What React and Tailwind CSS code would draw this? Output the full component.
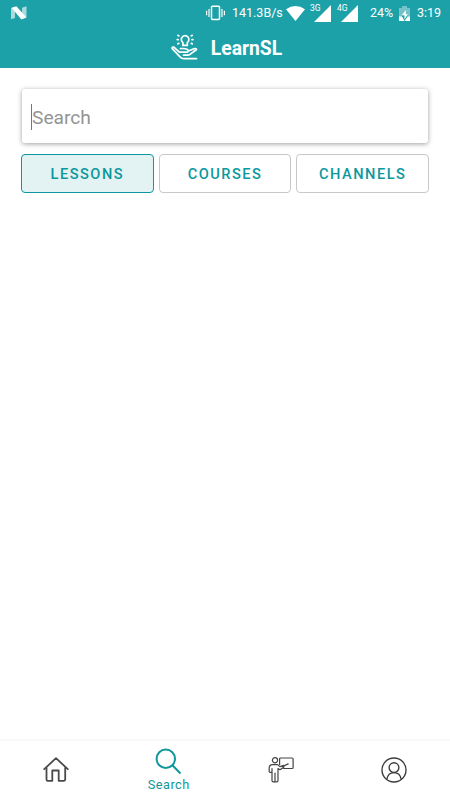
import React, { useState } from "react";

const TABS = ["Lessons", "Courses", "Channels"];

function NougatIcon() {
  return (
    <svg width="16" height="14" viewBox="0 0 16 14">
      <path d="M0 2.2 4 .8V12L0 13.2z" fill="#a9dbde" />
      <path d="M11 1.8 15.5.3v11L11 13z" fill="#a9dbde" />
      <path d="M.6 1.8 5.4.2 15.4 11.4 10.4 13.6z" fill="#fff" />
    </svg>
  );
}

function VibrateIcon() {
  return (
    <svg width="19" height="16" viewBox="0 0 19 16" fill="none" stroke="#fff">
      <rect x="5.5" y="1.2" width="8" height="13.3" rx="1" strokeWidth="1.5" />
      <path d="M3 4v8M.6 5.7v4.6M16 4v8M18.4 5.7v4.6" strokeWidth="1.2" />
    </svg>
  );
}

function WifiIcon() {
  return (
    <svg width="19" height="15" viewBox="0 0 19 15" fill="#fff">
      <path d="M0 3.2Q9.5-3 19 3.2L9.5 15z" />
    </svg>
  );
}

function Signal({ label }) {
  return (
    <div className="relative flex h-[18px] w-[21px] items-end justify-end">
      <span className="absolute top-[-1px] left-0 text-[8.5px] leading-[10px]">
        {label}
      </span>
      <svg width="17" height="17" viewBox="0 0 17 17" fill="#fff">
        <path d="M17 0v17H0z" />
      </svg>
    </div>
  );
}

function BatteryIcon() {
  return (
    <svg width="11" height="15" viewBox="0 0 11 15">
      <path d="M0 2h3V0h5v2h3v9H0z" fill="#75c3c8" />
      <path d="M0 10.5h11V15H0z" fill="#fff" />
      <path d="M6.8 4 2.6 9.4h2.8v4.2l3.4-5.4h-2z" fill="#fff" />
      <path d="M2.6 9.6h2.8v4l3-4.6v2l-3 4z" fill="#1da1a9" />
    </svg>
  );
}

function Logo() {
  return (
    <svg
      width="27"
      height="27"
      viewBox="0 0 27 27"
      fill="none"
      stroke="#fff"
      strokeWidth="1.7"
      strokeLinecap="round"
      strokeLinejoin="round"
    >
      <path d="M11.9 8.6a3.8 3.8 0 1 1 4.4 0v2.8h-4.4z" />
      <path d="M6.9 1.4l.9.4M6.2 5.6h1M6.9 9.8l.9-.4M21.2 1.4l-.9.4M21.9 5.6h-1M21.2 9.8l-.9-.4" />
      <path d="M25.5 24.6H12.5q-1.8 0-3-1.2L1.2 14.6q-.5-1.8 1.4-1.6L8.4 18.2H16.200q2-1.200.3-2.600-2.500-1.500-7-1" />
      <path d="M18 16.800l5-2q2-.6 2.600.7L19 20.400q-1 .8-2.500.8h-4" />
    </svg>
  );
}

function HomeIcon() {
  return (
    <svg
      width="26"
      height="26"
      viewBox="0 0 26 26"
      fill="none"
      stroke="#4a4a4a"
      strokeWidth="1.8"
      strokeLinejoin="round"
      strokeLinecap="round"
    >
      <path d="M1.2 12.2 13 1.2l11.8 11" />
      <path d="M3.5 11v11.5q0 1.3 1.3 1.3h4.5V13.5h6.4v10.3h5q1.5 0 1.5-1.3V11" />
    </svg>
  );
}

function SearchIcon() {
  return (
    <svg
      width="27"
      height="27"
      viewBox="0 0 27 27"
      fill="none"
      stroke="#0f979c"
      strokeWidth="2"
    >
      <circle cx="10.8" cy="10.8" r="9.2" />
      <path d="M17.4 17.3 25.5 25.5" />
    </svg>
  );
}

function TeacherIcon() {
  return (
    <svg
      width="26"
      height="26"
      viewBox="0 0 26 26"
      fill="none"
      stroke="#444"
      strokeWidth="1.2"
      strokeLinecap="round"
      strokeLinejoin="round"
    >
      <circle cx="7" cy="3.3" r="2.6" />
      <path d="M11.6 7.5V2q0-1 1-1h11.5q1 0 1 1v8.5q0 1-1 1h-8.6" />
      <path d="M4 23.5V11.5M4 15.4H2.2q-1 0-1-1V11q0-3.4 3.3-3.4h5.1l2.3 2 3.9-1.2v1.8l-3.8 2.5-2-1.1v11.9q0 1.3-1.4 1.3H5.3Q4 24.8 4 23.5" />
      <path d="M7 16v8.6M14 9.7l6.2-2.8" />
    </svg>
  );
}

function ProfileIcon() {
  return (
    <svg
      width="26"
      height="26"
      viewBox="0 0 26 26"
      fill="none"
      stroke="#3c3c3c"
      strokeWidth="1.35"
    >
      <circle cx="13" cy="13" r="12" />
      <circle cx="13" cy="10.6" r="4.9" />
      <path d="M5.8 22.4c.7-4.2 3.6-6.8 7.2-6.8s6.5 2.6 7.2 6.8" />
    </svg>
  );
}

function StatusBar() {
  return (
    <div className="flex h-[26px] items-center pr-2 pl-[11px] text-[12.5px]">
      <NougatIcon />
      <div className="ml-auto flex items-center">
        <VibrateIcon />
        <span className="ml-[7px] w-[54px] pt-px whitespace-nowrap">
          141.3B/s
        </span>
        <WifiIcon />
        <div className="ml-[5px] flex gap-[6px]">
          <Signal label="3G" />
          <Signal label="4G" />
        </div>
        <span className="ml-3 w-[29px] pt-px">24%</span>
        <BatteryIcon />
        <span className="ml-[7px] w-[25px] pt-px">3:19</span>
      </div>
    </div>
  );
}

export default function App() {
  const [active, setActive] = useState("Lessons");

  return (
    <div className="flex h-[800px] w-[450px] flex-col overflow-hidden bg-white font-['Roboto',sans-serif]">
      <header className="h-[68px] bg-[#1da1a9] text-white">
        <StatusBar />
        <div className="flex h-[42px] items-center justify-center gap-[13px] pl-[3px]">
          <Logo />
          <h1 className="pt-[3px] text-[19.3px] leading-6 font-bold">
            LearnSL
          </h1>
        </div>
      </header>

      <main className="flex-1 px-[21px] pt-[21px]">
        <div className="mx-px flex h-[54px] items-center rounded-[3px] bg-white pl-[9px] shadow-[0_1px_5px_rgba(0,0,0,0.38)]">
          <div className="mt-px h-[26px] w-px bg-[#777]" />
          <span className="pt-1 text-[19.2px] text-[#949494]">Search</span>
        </div>
        <div className="mt-[11px] flex gap-[5px]">
          {TABS.map((tab) => (
            <button
              key={tab}
              onClick={() => setActive(tab)}
              className={`h-[39px] flex-1 rounded-[4px] border pt-[3px] text-[14.6px] font-medium tracking-[1.5px] text-[#0c989e] uppercase ${
                active === tab
                  ? "border-[#0c989e] bg-[#e3f2f3]"
                  : "border-[#c8c8c8] bg-white"
              }`}
            >
              {tab}
            </button>
          ))}
        </div>
      </main>

      <nav className="grid h-[61px] grid-cols-4 justify-items-center border-t-2 border-[#f7f7f7]">
        <button className="pb-px">
          <HomeIcon />
        </button>
        <button className="flex flex-col items-center justify-start gap-[2px] pt-[7px]">
          <SearchIcon />
          <span className="text-[12.7px] leading-[15px] tracking-[0.5px] text-[#0f979c]">
            Search
          </span>
        </button>
        <button className="pb-[2px]">
          <TeacherIcon />
        </button>
        <button className="pb-[2px]">
          <ProfileIcon />
        </button>
      </nav>
    </div>
  );
}
